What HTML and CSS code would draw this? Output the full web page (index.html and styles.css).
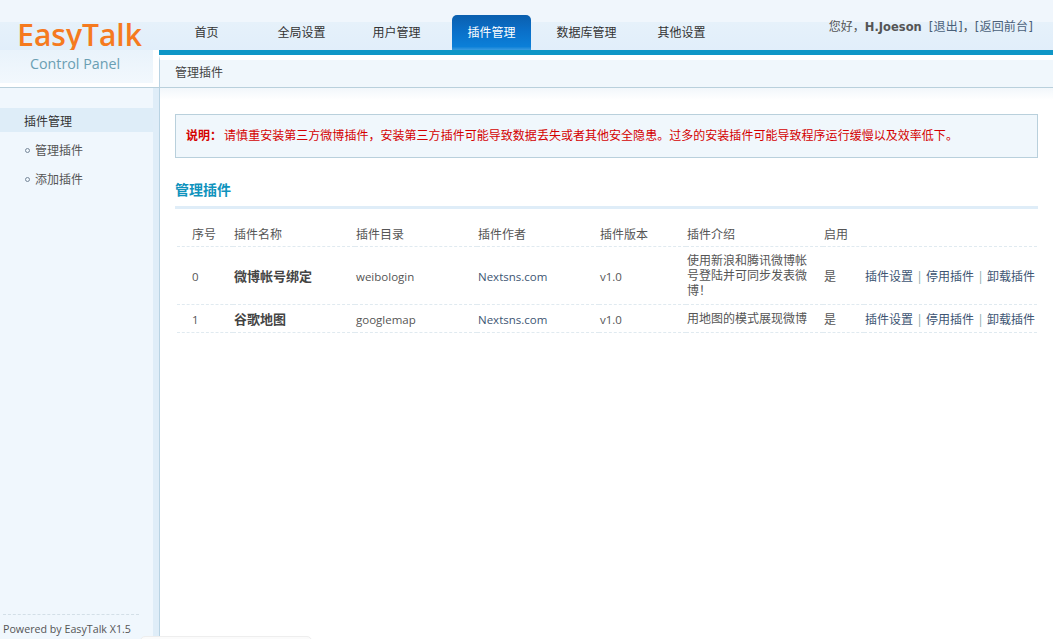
FILE: index.html
```html
<!DOCTYPE html>
<html lang="zh-CN">
<head>
    <meta charset="UTF-8">
    <title>EasyTalk Control Panel</title>
    <link rel="stylesheet" href="styles.css">
</head>
<body>

    <div class="top">
        <div class="mainnav">
            <div class="logo-top">
                <div class="logo-name">EasyTalk</div>
            </div>
            <ul class="tabs">
                <li><a href="#">首页</a></li>
                <li><a href="#">全局设置</a></li>
                <li><a href="#">用户管理</a></li>
                <li class="active"><a href="#">插件管理</a></li>
                <li><a href="#">数据库管理</a></li>
                <li><a href="#">其他设置</a></li>
            </ul>
            <div class="userinfo">您好，<b>H.Joeson</b><a href="#">[退出]</a>，<a href="#">[返回前台]</a></div>
        </div>
        <div class="undernav">
            <div class="logo-bottom">
                <div class="logo-sub">Control Panel</div>
            </div>
            <div class="undernav-right">
                <div class="stripe"></div>
                <div class="subnav">管理插件</div>
            </div>
        </div>
    </div>

    <div class="wrap">
        <div class="side">
            <div class="side-menu">
                <div class="side-title">插件管理</div>
                <a class="side-item" href="#">管理插件</a>
                <a class="side-item" href="#">添加插件</a>
            </div>
            <div class="powered">Powered by EasyTalk X1.5</div>
        </div>

        <div class="main">
            <div class="notice"><b>说明：</b>请慎重安装第三方微博插件，安装第三方插件可能导致数据丢失或者其他安全隐患。过多的安装插件可能导致程序运行缓慢以及效率低下。</div>

            <h2 class="title">管理插件</h2>

            <table class="plugins">
                <colgroup>
                    <col class="w-id">
                    <col class="w-col">
                    <col class="w-col">
                    <col class="w-col">
                    <col class="w-ver">
                    <col class="w-info">
                    <col class="w-on">
                    <col class="w-act">
                </colgroup>
                <tr>
                    <th class="c-id">序号</th>
                    <th>插件名称</th>
                    <th>插件目录</th>
                    <th>插件作者</th>
                    <th>插件版本</th>
                    <th>插件介绍</th>
                    <th>启用</th>
                    <th></th>
                </tr>
                <tr>
                    <td class="c-id en">0</td>
                    <td><b>微博帐号绑定</b></td>
                    <td class="en">weibologin</td>
                    <td class="en"><a href="#">Nextsns.com</a></td>
                    <td class="en">v1.0</td>
                    <td class="c-info">使用新浪和腾讯微博帐号登陆并可同步发表微博！</td>
                    <td>是</td>
                    <td class="c-act"><a href="#">插件设置</a><i>|</i><a href="#">停用插件</a><i>|</i><a href="#">卸载插件</a></td>
                </tr>
                <tr>
                    <td class="c-id en">1</td>
                    <td><b>谷歌地图</b></td>
                    <td class="en">googlemap</td>
                    <td class="en"><a href="#">Nextsns.com</a></td>
                    <td class="en">v1.0</td>
                    <td class="c-info">用地图的模式展现微博</td>
                    <td>是</td>
                    <td class="c-act"><a href="#">插件设置</a><i>|</i><a href="#">停用插件</a><i>|</i><a href="#">卸载插件</a></td>
                </tr>
            </table>
        </div>
    </div>

    <div class="peek"></div>

</body>
</html>
```

FILE: styles.css
```css
html, body{
    height: 100%;
    overflow: hidden;
}

body{
    margin: 0;
    display: flex;
    flex-direction: column;
    background: #fff;
    color: #444;
    font-family: "Open Sans", "Noto Sans CJK SC", sans-serif;
    font-size: 12px;
}

a{
    color: inherit;
    text-decoration: none;
}

ul{
    margin: 0;
    padding: 0;
    list-style: none;
}

/* top */
.top{
    flex: none;
    height: 88px;
    border-bottom: 1px solid #b9d0dc;
    box-sizing: border-box;
}

.mainnav{
    display: flex;
    height: 50px;
    background: linear-gradient(#f0f6fc 0, #f0f6fc 22px, #e6f1fa 22px, #e1eefa 50px);
}

.logo-top{
    flex: none;
    width: 153px;
}

.logo-name{
    padding: 14px 0 0 6px;
    font-size: 30px;
    font-weight: 600;
    line-height: 41px;
    text-align: center;
    color: #f57a1f;
}

.tabs{
    display: flex;
    gap: 16px;
    padding: 15px 0 0 14px;
}

.tabs li{
    width: 79px;
    height: 35px;
    line-height: 36px;
    text-align: center;
    color: #333;
}

.tabs .active{
    color: #fff;
    border-radius: 5px 5px 0 0;
    background: linear-gradient(#0b5fae, #0a6fc8 45%, #0b7fd8 90%, #3a9be0);
}

.userinfo{
    margin-left: auto;
    padding: 18px 20px 0 0;
    line-height: 18px;
    font-family: "DejaVu Sans", "Noto Sans CJK SC", sans-serif;
    color: #555;
}

.userinfo b{
    margin-right: 7px;
    font-size: 11.5px;
}

.userinfo a{
    letter-spacing: 0.15px;
    color: #4a6079;
}

.undernav{
    display: flex;
    height: 37px;
}

.logo-bottom{
    flex: none;
    width: 153px;
    height: 33px;
    background: linear-gradient(#e9f3fb, #f2f8fd);
}

.logo-sub{
    padding: 5px 3px 0 0;
    font-size: 14.3px;
    line-height: 18px;
    text-align: center;
    color: #6a9fb3;
}

.undernav-right{
    flex: 1;
    margin-left: 6px;
}

.stripe{
    height: 5px;
    background: #0f96c6;
}

.subnav{
    height: 27px;
    padding-left: 15px;
    border-top: 5px solid #fff;
    border-left: 1px solid #b9d3e3;
    line-height: 26px;
    background: #f0f7fc;
}

/* body */
.wrap{
    display: flex;
    flex: 1;
    min-height: 0;
}

.side{
    flex: none;
    display: flex;
    flex-direction: column;
    justify-content: space-between;
    width: 153px;
    background: #f0f7fd;
    border-right: 6px solid #dfedf8;
}

.side-menu{
    padding-top: 20px;
}

.side-title{
    height: 24px;
    padding-left: 24px;
    line-height: 27px;
    background: #deedf8;
    color: #333;
}

.side-item{
    display: block;
    position: relative;
    height: 29px;
    padding-left: 35px;
    line-height: 37px;
    color: #555;
}

.side-item::before{
    content: "";
    position: absolute;
    left: 25px;
    top: 16px;
    width: 3px;
    height: 3px;
    border: 1px solid #789;
    border-radius: 50%;
}

.powered{
    height: 24px;
    margin: 0 14px 0 3px;
    border-top: 1px dashed #d3dfe7;
    line-height: 28px;
    font-size: 10.7px;
    white-space: nowrap;
    color: #555;
}

.main{
    flex: 1;
    min-width: 0;
    padding: 26px 15px 0;
    border-left: 1px solid #b9d3e3;
    background: linear-gradient(#f2f7fb, #fff 12px) no-repeat;
}

.notice{
    height: 42px;
    padding-left: 10px;
    line-height: 42px;
    background: #f0f7fc;
    border: 1px solid #b9d0dc;
    color: #d40000;
    letter-spacing: 0.03px;
    white-space: nowrap;
}

.notice b{
    margin-right: 2px;
}

.title{
    margin: 21px 0 13px;
    padding-bottom: 5px;
    border-bottom: 3px solid #dfedf8;
    font-size: 14px;
    line-height: 22px;
    color: #0f93bd;
}

.plugins{
    width: 860px;
    margin-left: 2px;
    table-layout: fixed;
    border-collapse: collapse;
}

.w-id{ width: 56px; }
.w-col{ width: 122px; }
.w-ver{ width: 87px; }
.w-info{ width: 137px; }
.w-on{ width: 41px; }
.w-act{ width: 173px; }

.plugins th, .plugins td{
    padding: 0 0 0 1px;
    border-bottom: 1px dashed #e0eaf0;
    font-weight: normal;
    text-align: left;
    line-height: 15px;
    color: #555;
}

.plugins th{
    height: 24px;
}

.plugins td{
    padding-top: 2px;
}

.plugins .en{
    font-size: 11.5px;
}

.plugins td b{
    font-size: 13px;
    color: #444;
}

.plugins a{
    color: #3d5573;
}

.plugins .c-id{
    padding-left: 15px;
}

.plugins .c-info{
    padding: 6px 16px 6px 1px;
}

.c-act{
    white-space: nowrap;
}

.c-act i{
    display: inline-block;
    width: 13px;
    text-align: center;
    font-style: normal;
    color: #8aa;
}

.peek{
    position: absolute;
    left: 140px;
    top: 636px;
    width: 172px;
    height: 10px;
    background: #fbfbfb;
    border: 1px solid #eee;
    border-radius: 5px;
    box-sizing: border-box;
}
```
